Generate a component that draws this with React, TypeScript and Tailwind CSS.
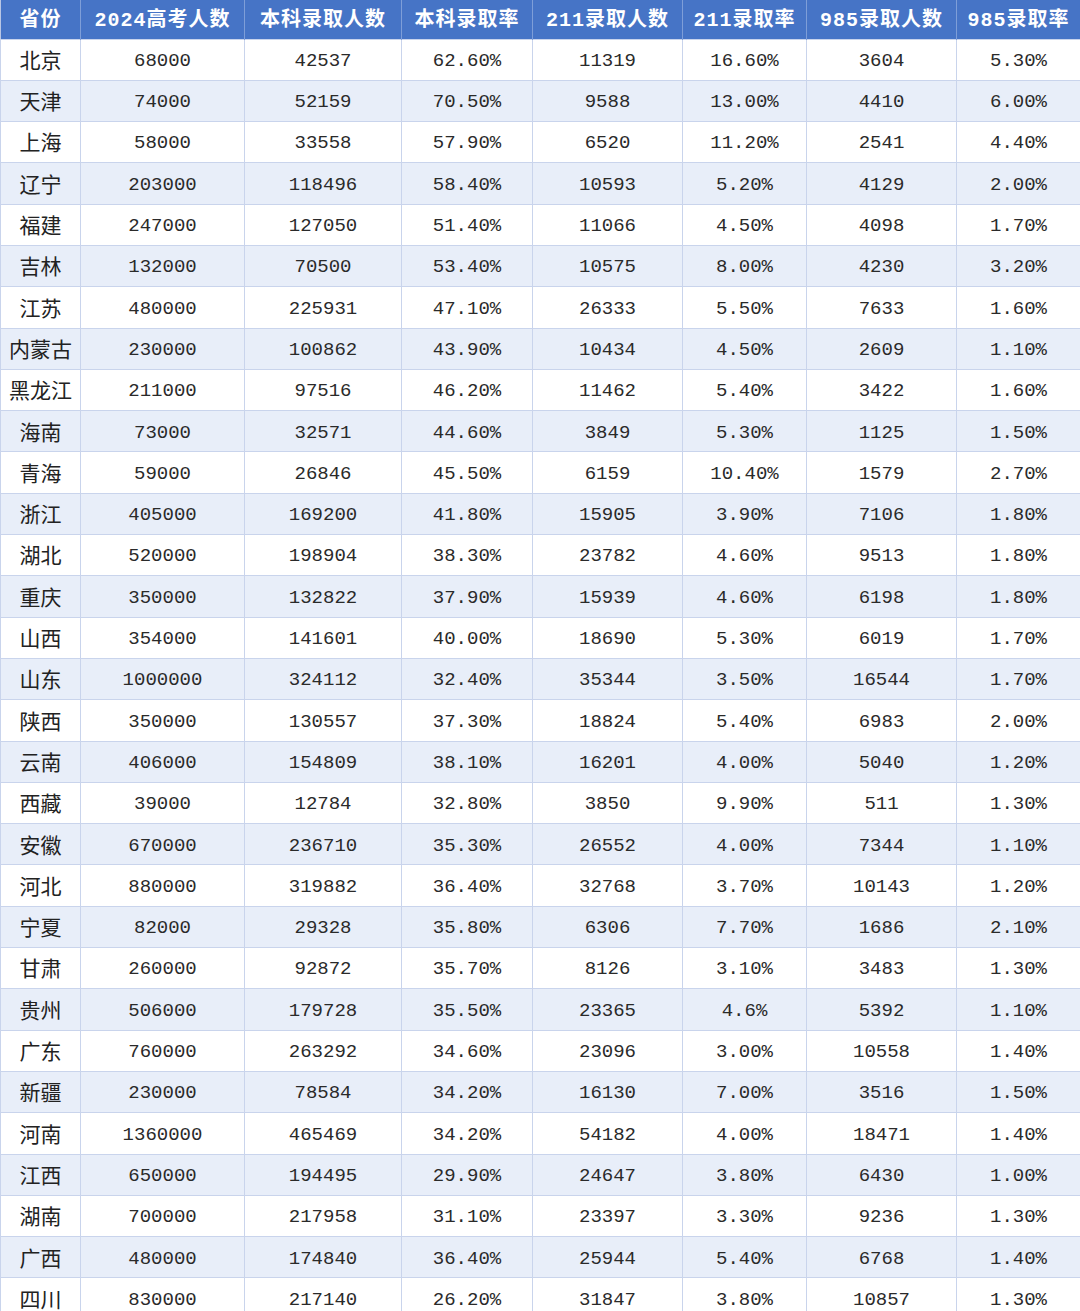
const headers = ["省份", "2024高考人数", "本科录取人数", "本科录取率", "211录取人数", "211录取率", "985录取人数", "985录取率"];

const widths = [80, 164, 157, 131, 150, 124, 150, 124];

const rows = [
  ["北京", "68000", "42537", "62.60%", "11319", "16.60%", "3604", "5.30%"],
  ["天津", "74000", "52159", "70.50%", "9588", "13.00%", "4410", "6.00%"],
  ["上海", "58000", "33558", "57.90%", "6520", "11.20%", "2541", "4.40%"],
  ["辽宁", "203000", "118496", "58.40%", "10593", "5.20%", "4129", "2.00%"],
  ["福建", "247000", "127050", "51.40%", "11066", "4.50%", "4098", "1.70%"],
  ["吉林", "132000", "70500", "53.40%", "10575", "8.00%", "4230", "3.20%"],
  ["江苏", "480000", "225931", "47.10%", "26333", "5.50%", "7633", "1.60%"],
  ["内蒙古", "230000", "100862", "43.90%", "10434", "4.50%", "2609", "1.10%"],
  ["黑龙江", "211000", "97516", "46.20%", "11462", "5.40%", "3422", "1.60%"],
  ["海南", "73000", "32571", "44.60%", "3849", "5.30%", "1125", "1.50%"],
  ["青海", "59000", "26846", "45.50%", "6159", "10.40%", "1579", "2.70%"],
  ["浙江", "405000", "169200", "41.80%", "15905", "3.90%", "7106", "1.80%"],
  ["湖北", "520000", "198904", "38.30%", "23782", "4.60%", "9513", "1.80%"],
  ["重庆", "350000", "132822", "37.90%", "15939", "4.60%", "6198", "1.80%"],
  ["山西", "354000", "141601", "40.00%", "18690", "5.30%", "6019", "1.70%"],
  ["山东", "1000000", "324112", "32.40%", "35344", "3.50%", "16544", "1.70%"],
  ["陕西", "350000", "130557", "37.30%", "18824", "5.40%", "6983", "2.00%"],
  ["云南", "406000", "154809", "38.10%", "16201", "4.00%", "5040", "1.20%"],
  ["西藏", "39000", "12784", "32.80%", "3850", "9.90%", "511", "1.30%"],
  ["安徽", "670000", "236710", "35.30%", "26552", "4.00%", "7344", "1.10%"],
  ["河北", "880000", "319882", "36.40%", "32768", "3.70%", "10143", "1.20%"],
  ["宁夏", "82000", "29328", "35.80%", "6306", "7.70%", "1686", "2.10%"],
  ["甘肃", "260000", "92872", "35.70%", "8126", "3.10%", "3483", "1.30%"],
  ["贵州", "506000", "179728", "35.50%", "23365", "4.6%", "5392", "1.10%"],
  ["广东", "760000", "263292", "34.60%", "23096", "3.00%", "10558", "1.40%"],
  ["新疆", "230000", "78584", "34.20%", "16130", "7.00%", "3516", "1.50%"],
  ["河南", "1360000", "465469", "34.20%", "54182", "4.00%", "18471", "1.40%"],
  ["江西", "650000", "194495", "29.90%", "24647", "3.80%", "6430", "1.00%"],
  ["湖南", "700000", "217958", "31.10%", "23397", "3.30%", "9236", "1.30%"],
  ["广西", "480000", "174840", "36.40%", "25944", "5.40%", "6768", "1.40%"],
  ["四川", "830000", "217140", "26.20%", "31847", "3.80%", "10857", "1.30%"],
];

export default function App() {
  return (
    <div className="w-[1080px] h-[1311px] overflow-hidden bg-white">
      <table className="table-fixed border-collapse w-[1080px] border-l border-r border-[#b9c6e4]">
        <colgroup>
          {widths.map((w, i) => (
            <col key={i} style={{ width: w }} />
          ))}
        </colgroup>
        <thead>
          <tr className="h-[39px] bg-[#4674c6]">
            {headers.map((h) => (
              <th
                key={h}
                className="border-r border-[#7e9ed8] text-white font-bold text-[20px] tracking-[1px] p-0 pt-[3px] whitespace-nowrap font-['Liberation_Mono','Noto_Sans_CJK_SC',monospace]"
              >
                {h}
              </th>
            ))}
          </tr>
        </thead>
        <tbody>
          {rows.map((r, i) => (
            <tr
              key={r[0]}
              className={`h-[41.3px] ${i % 2 === 1 ? "bg-[#e8eef9]" : "bg-white"}`}
            >
              {r.map((c, j) => (
                <td
                  key={j}
                  className={`border border-[#c9d4ec] p-0 text-center whitespace-nowrap ${
                    j === 0
                      ? "text-[21px] text-[#222] font-['Noto_Sans_CJK_SC',sans-serif]"
                      : "pt-[3px] text-[19px] text-[#2a2a2a] font-['Liberation_Mono','Noto_Sans_CJK_SC',monospace]"
                  }`}
                >
                  {c}
                </td>
              ))}
            </tr>
          ))}
        </tbody>
      </table>
    </div>
  );
}
